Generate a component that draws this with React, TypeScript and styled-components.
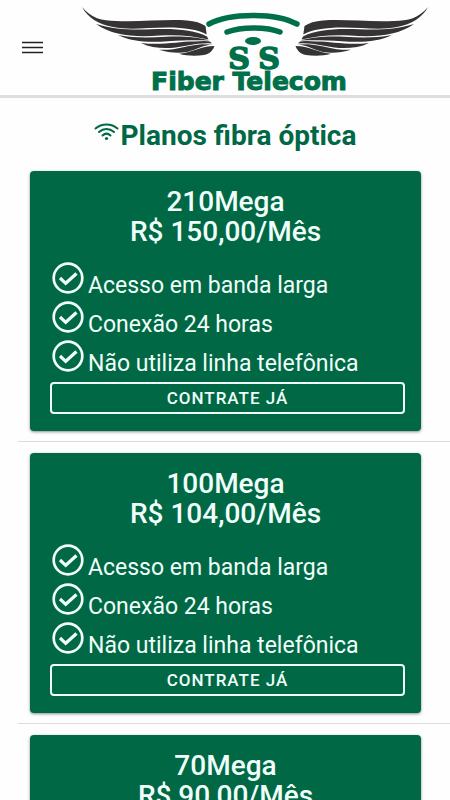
import React from "react";
import styled, { createGlobalStyle } from "styled-components";

const GREEN = "#006845";

const GlobalStyle = createGlobalStyle`
  *, *::before, *::after { box-sizing: border-box; }
  body {
    margin: 0;
    background: #fefefe;
    color: ${GREEN};
    font-family: Roboto, "Liberation Sans", sans-serif;
  }
`;

const Header = styled.header`
  display: flex;
  align-items: center;
  justify-content: space-between;
  height: 98px;
  padding: 0 20px;
  border-bottom: 3px solid #dedede;
  background: #fefefe;
`;

const MenuButton = styled.button`
  display: flex;
  align-items: center;
  justify-content: center;
  width: 24px;
  height: 24px;
  padding: 0;
  border: 0;
  background: none;
`;

const LogoLink = styled.a`
  display: block;
`;

const LogoArt = styled.svg`
  display: block;
  width: 350px;
  height: 90px;
  overflow: visible;
`;

const Main = styled.main`
  padding-left: 18px;
`;

const Title = styled.h1`
  display: flex;
  justify-content: center;
  gap: 2px;
  margin: 0;
  padding: 20px 18px 17px 0;
  font-size: 28px;
  font-weight: 700;
  line-height: 36px;
`;

const WifiArt = styled.svg`
  width: 25px;
  height: 18px;
  margin-top: 5px;
`;

const PlanSection = styled.section`
  padding: 0 29px 10px 12px;

  & + & {
    border-top: 1px solid #dcdcdc;
    padding-top: 11px;
  }
`;

const Card = styled.article`
  padding: 16px 0 17px;
  border-radius: 4px;
  background: ${GREEN};
  color: #f0fff9;
  box-shadow: 0 1px 3px rgba(0, 0, 0, 0.45);
`;

const PlanName = styled.h2`
  margin: 0;
  font-size: 28px;
  font-weight: 500;
  line-height: 30px;
  text-align: center;
`;

const CardBody = styled.div`
  padding: 15px 16px 0 20px;
`;

const Features = styled.ul`
  display: grid;
  gap: 6px;
  margin: 0;
  padding: 0 0 9px 2px;
  list-style: none;
`;

const Feature = styled.li`
  display: flex;
  align-items: flex-start;
  gap: 4px;
  height: 33px;
  font-size: 23px;
  line-height: 26px;
`;

const FeatureText = styled.span`
  padding-top: 11px;
  white-space: nowrap;
`;

const CheckArt = styled.svg`
  flex: none;
  width: 32px;
  height: 32px;
`;

const HireButton = styled.button`
  display: block;
  width: 100%;
  height: 32px;
  padding: 0;
  border: 2px solid #f0fff9;
  border-radius: 4px;
  background: none;
  color: inherit;
  font: 500 17px/28px Roboto, "Liberation Sans", sans-serif;
  letter-spacing: 1px;
  text-transform: uppercase;
`;

const Wing = () => (
  <g fill="#353334">
    <path d="M82 7C91 18 102 21 116 21C142 22 166 19 187 20.500C195 21 201 23 205.500 26L206.700 34.500C198 29.500 184 27.500 168 27.500C146 27.500 130 30.500 113 27C98 24 88 18 82 7Z" />
    <path d="M96 24C116 30 133 30 151 29.300C174 28.300 194 29.500 207 36.500L208.500 39.500C192 35.500 177 34.500 160 35.500C136 37.500 113 36 96 24Z" />
    <path d="M118 35C136 38.500 151 37.500 166 36.800C184 36 198 37.500 209.500 40.500C194 40 182 40.500 168 41.200C149 42.500 132 42 118 35Z" />
    <path d="M141 43C162 45.500 178 41.500 194 41.500C200 41 206 40.500 210 41.500L212 43.500C196 42.500 185 47 171 48C160 48.500 150 47.500 141 43Z" />
    <path d="M159 49.800C177 50.500 188 45 202 44.200L213 44.500C204 44.500 196 50 187 52C178 53.500 168 52.500 159 49.800Z" />
    <path d="M179 53.700C195 52 200 46 214.500 46C213 50 210 54 204 55C196 56 187 56 179 53.700Z" />
  </g>
);

const Logo = () => (
  <LogoArt viewBox="80 3 350 90" role="img" aria-label="SS Fiber Telecom">
    <Wing />
    <g transform="matrix(-1 0 0 1 510 0)">
      <Wing />
    </g>
    <g fill="none" stroke="#00704a" strokeWidth="5.500" strokeLinecap="round">
      <path d="M209 24C230 12.500 276 12.500 297 24" />
      <path d="M227 32C241 26.500 267 26.500 280 32" />
    </g>
    <ellipse cx="253" cy="41" rx="8" ry="4" fill="#00704a" />
    <g fill="#00704a" stroke="#00704a" fontWeight="700" textAnchor="middle">
      <g fontFamily="'DejaVu Serif', serif" fontSize="30" strokeWidth="1.500">
        <text x="239" y="69">S</text>
        <text x="269" y="69">S</text>
      </g>
      <text x="249" y="90" fontFamily="'DejaVu Sans', sans-serif" fontSize="25" strokeWidth="1">
        Fiber Telecom
      </text>
    </g>
  </LogoArt>
);

const Wifi = () => (
  <WifiArt viewBox="0 0 25 18" fill="none" stroke={GREEN} strokeLinecap="round" strokeWidth="2" aria-hidden="true">
    <path d="M1.500 5.500C7.500 0 17.500 0 23.500 5.500M5 9C9.500 5 15.500 5 20 9M8.500 12.500C11 10.200 14 10.200 16.500 12.500" />
    <circle cx="12.500" cy="15.500" r="1.600" fill={GREEN} stroke="none" />
  </WifiArt>
);

const Check = () => (
  <CheckArt viewBox="0 0 32 32" fill="none" stroke="#f0fff9" aria-hidden="true">
    <circle cx="16" cy="16" r="14.300" strokeWidth="2.700" />
    <path d="M8 16L13.700 21.300L24.500 11.500" strokeWidth="3.200" />
  </CheckArt>
);

const features = ["Acesso em banda larga", "Conexão 24 horas", "Não utiliza linha telefônica"];

const plans = [
  { speed: "210Mega", price: "R$ 150,00/Mês" },
  { speed: "100Mega", price: "R$ 104,00/Mês" },
  { speed: "70Mega", price: "R$ 90,00/Mês" },
];

export default function App() {
  return (
    <>
      <GlobalStyle />
      <Header>
        <MenuButton aria-label="Menu">
          <svg width="21" height="14" viewBox="0 0 21 14" stroke="#222" strokeWidth="1.700" aria-hidden="true">
            <path d="M0 1.500H21M0 6.500H21M0 11.500H21" />
          </svg>
        </MenuButton>
        <LogoLink href="#" aria-label="SS Fiber Telecom">
          <Logo />
        </LogoLink>
      </Header>
      <Main>
        <Title>
          <Wifi />
          Planos fibra óptica
        </Title>
        {plans.map((plan) => (
          <PlanSection key={plan.speed}>
            <Card>
              <PlanName>
                {plan.speed}
                <br />
                {plan.price}
              </PlanName>
              <CardBody>
                <Features>
                  {features.map((feature) => (
                    <Feature key={feature}>
                      <Check />
                      <FeatureText>{feature}</FeatureText>
                    </Feature>
                  ))}
                </Features>
                <HireButton type="button">Contrate já</HireButton>
              </CardBody>
            </Card>
          </PlanSection>
        ))}
      </Main>
    </>
  );
}
